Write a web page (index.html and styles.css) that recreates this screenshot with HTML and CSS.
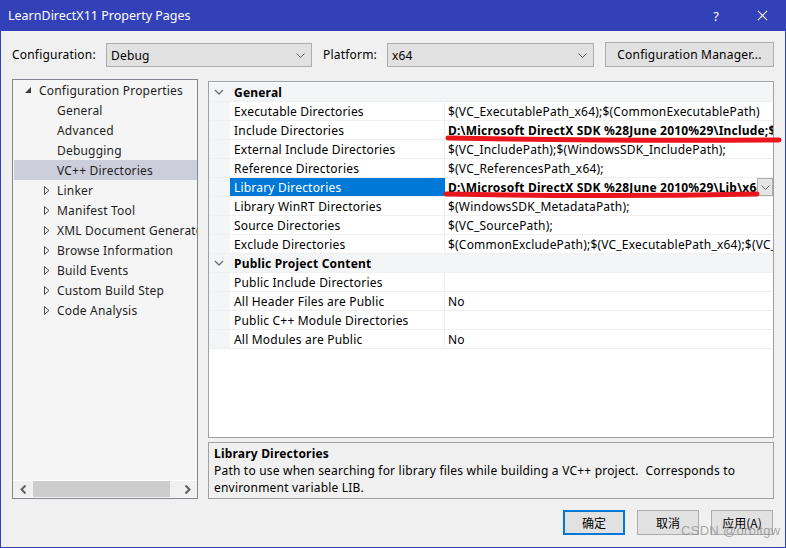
FILE: index.html
```html
<!DOCTYPE html>
<html>
<head>
<meta charset="utf-8">
<link rel="stylesheet" href="styles.css">
</head>
<body>
<div class="window">
  <div class="titlebar">
    <span class="title">LearnDirectX11 Property Pages</span>
    <span class="help">?</span>
    <svg class="close" width="12" height="12" viewBox="0 0 12 12"><path d="M1 1L11 11M11 1L1 11" stroke="#fff" stroke-width="1.2" fill="none"/></svg>
  </div>

  <div class="config-row">
    <span class="lbl lbl-config">Configuration:</span>
    <div class="combo combo-config"><span>Debug</span><svg class="chev" width="9" height="5" viewBox="0 0 9 5"><path d="M0.5 0.5L4.5 4.5L8.5 0.5" stroke="#606060" fill="none"/></svg></div>
    <span class="lbl lbl-platform">Platform:</span>
    <div class="combo combo-platform"><span>x64</span><svg class="chev" width="9" height="5" viewBox="0 0 9 5"><path d="M0.5 0.5L4.5 4.5L8.5 0.5" stroke="#606060" fill="none"/></svg></div>
    <div class="btn btn-manager">Configuration Manager...</div>
  </div>

  <div class="main">
    <div class="tree">
      <div class="tree-items">
        <div class="tree-row lvl0"><svg class="tri-open" width="7" height="7" viewBox="0 0 7 7"><path d="M6 0L6 6L0 6Z" fill="#3c3c3c"/></svg><span>Configuration Properties</span></div>
        <div class="tree-row lvl1">General</div>
        <div class="tree-row lvl1">Advanced</div>
        <div class="tree-row lvl1">Debugging</div>
        <div class="tree-row lvl1 selected">VC++ Directories</div>
        <div class="tree-row lvl1c"><svg class="tri" width="6" height="9" viewBox="0 0 6 9"><path d="M0.5 0.5L5 4.5L0.5 8.5Z" fill="none" stroke="#4a4a4a"/></svg><span>Linker</span></div>
        <div class="tree-row lvl1c"><svg class="tri" width="6" height="9" viewBox="0 0 6 9"><path d="M0.5 0.5L5 4.5L0.5 8.5Z" fill="none" stroke="#4a4a4a"/></svg><span>Manifest Tool</span></div>
        <div class="tree-row lvl1c"><svg class="tri" width="6" height="9" viewBox="0 0 6 9"><path d="M0.5 0.5L5 4.5L0.5 8.5Z" fill="none" stroke="#4a4a4a"/></svg><span>XML Document Generator</span></div>
        <div class="tree-row lvl1c"><svg class="tri" width="6" height="9" viewBox="0 0 6 9"><path d="M0.5 0.5L5 4.5L0.5 8.5Z" fill="none" stroke="#4a4a4a"/></svg><span>Browse Information</span></div>
        <div class="tree-row lvl1c"><svg class="tri" width="6" height="9" viewBox="0 0 6 9"><path d="M0.5 0.5L5 4.5L0.5 8.5Z" fill="none" stroke="#4a4a4a"/></svg><span>Build Events</span></div>
        <div class="tree-row lvl1c"><svg class="tri" width="6" height="9" viewBox="0 0 6 9"><path d="M0.5 0.5L5 4.5L0.5 8.5Z" fill="none" stroke="#4a4a4a"/></svg><span>Custom Build Step</span></div>
        <div class="tree-row lvl1c"><svg class="tri" width="6" height="9" viewBox="0 0 6 9"><path d="M0.5 0.5L5 4.5L0.5 8.5Z" fill="none" stroke="#4a4a4a"/></svg><span>Code Analysis</span></div>
      </div>
      <div class="hscroll">
        <svg class="sarrow" width="7" height="9" viewBox="0 0 7 9"><path d="M5.5 0.5L1.5 4.5L5.5 8.5" stroke="#606060" stroke-width="2" fill="none"/></svg>
        <div class="strack"><div class="sthumb"></div></div>
        <svg class="sarrow" width="7" height="9" viewBox="0 0 7 9"><path d="M1.5 0.5L5.5 4.5L1.5 8.5" stroke="#606060" stroke-width="2" fill="none"/></svg>
      </div>
    </div>

    <div class="right">
      <div class="grid">
        <div class="grow cat"><div class="gut"><svg width="10" height="6" viewBox="0 0 10 6"><path d="M1 1L5 5L9 1" stroke="#6e6e6e" stroke-width="1.3" fill="none"/></svg></div><div class="cat-name">General</div></div>
        <div class="grow"><div class="gut"></div><div class="gname">Executable Directories</div><div class="gval">$(VC_ExecutablePath_x64);$(CommonExecutablePath)</div></div>
        <div class="grow"><div class="gut"></div><div class="gname">Include Directories</div><div class="gval bold">D:\Microsoft DirectX SDK %28June 2010%29\Include;$(IncludePath)</div></div>
        <div class="grow"><div class="gut"></div><div class="gname">External Include Directories</div><div class="gval">$(VC_IncludePath);$(WindowsSDK_IncludePath);</div></div>
        <div class="grow"><div class="gut"></div><div class="gname">Reference Directories</div><div class="gval">$(VC_ReferencesPath_x64);</div></div>
        <div class="grow sel"><div class="gut"></div><div class="gname">Library Directories</div><div class="gval bold"><span class="vtext">D:\Microsoft DirectX SDK %28June 2010%29\Lib\x64;$(LibraryPath)</span><div class="ddbtn"><svg width="9" height="5" viewBox="0 0 9 5"><path d="M0.5 0.5L4.5 4.5L8.5 0.5" stroke="#606060" fill="none"/></svg></div></div></div>
        <div class="grow"><div class="gut"></div><div class="gname">Library WinRT Directories</div><div class="gval">$(WindowsSDK_MetadataPath);</div></div>
        <div class="grow"><div class="gut"></div><div class="gname">Source Directories</div><div class="gval">$(VC_SourcePath);</div></div>
        <div class="grow"><div class="gut"></div><div class="gname">Exclude Directories</div><div class="gval">$(CommonExcludePath);$(VC_ExecutablePath_x64);$(VC_LibraryPath_x64)</div></div>
        <div class="grow cat"><div class="gut"><svg width="10" height="6" viewBox="0 0 10 6"><path d="M1 1L5 5L9 1" stroke="#6e6e6e" stroke-width="1.3" fill="none"/></svg></div><div class="cat-name">Public Project Content</div></div>
        <div class="grow"><div class="gut"></div><div class="gname">Public Include Directories</div><div class="gval"></div></div>
        <div class="grow"><div class="gut"></div><div class="gname">All Header Files are Public</div><div class="gval">No</div></div>
        <div class="grow"><div class="gut"></div><div class="gname">Public C++ Module Directories</div><div class="gval"></div></div>
        <div class="grow"><div class="gut"></div><div class="gname">All Modules are Public</div><div class="gval">No</div></div>
      </div>
      <div class="desc">
        <div class="desc-title">Library Directories</div>
        <div class="desc-text">Path to use when searching for library files while building a VC++ project.&nbsp; Corresponds to<br>environment variable LIB.</div>
      </div>
    </div>
  </div>

  <div class="footer">
    <div class="btn btn-ok">确定</div>
    <div class="btn">取消</div>
    <div class="btn">应用(A)</div>
  </div>

  <div class="watermark">CSDN @orbitgw</div>
  <svg class="marks" width="786" height="548" viewBox="0 0 786 548">
    <path d="M448 138 Q600 141 779 140" stroke="#e8161c" stroke-width="5" stroke-linecap="round" fill="none"/>
    <path d="M446 194 Q600 197 757 194" stroke="#e8161c" stroke-width="5" stroke-linecap="round" fill="none"/>
  </svg>
</div>
</body>
</html>
```

FILE: styles.css
```css
* { box-sizing: border-box; }
html, body { margin: 0; padding: 0; }
body {
  width: 786px;
  height: 548px;
  overflow: hidden;
  font-family: "Noto Sans", "Noto Sans CJK SC", sans-serif;
  font-size: 12px;
  letter-spacing: 0.2px;
  color: #000;
}
svg { flex: none; }
.window {
  position: relative;
  width: 786px;
  height: 548px;
  border: 1px solid #3341b8;
  border-top: none;
  background: #f0f0f0;
  display: flex;
  flex-direction: column;
}
.titlebar {
  height: 31px;
  flex: none;
  background: #3341b8;
  color: #fff;
  display: flex;
  align-items: center;
  padding-left: 8px;
  margin: 0 -1px;
  font-size: 12.5px;
  letter-spacing: 0;
}
.title { flex: 1; }
.help { font-size: 13px; margin-right: 38px; }
.close { margin-right: 18px; width: 11px; height: 11px; }

.config-row {
  display: flex;
  align-items: flex-start;
  height: 25px;
  margin-top: 11px;
  padding-left: 11px;
  flex: none;
}
.lbl { line-height: 25px; color: #000; }
.lbl-config { width: 94px; }
.lbl-platform { width: 64px; margin-left: 11px; }
.combo {
  margin-top: 1px;
  height: 24px;
  width: 206px;
  background: #e1e1e1;
  border: 1px solid #adadad;
  display: flex;
  align-items: center;
  justify-content: space-between;
  padding: 0 6px 0 4px;
}
.combo-platform { width: 207px; }
.chev { display: block; }
.btn {
  height: 25px;
  background: #e1e1e1;
  border: 1px solid #adadad;
  display: flex;
  align-items: center;
  justify-content: center;
}
.btn-manager { margin-left: 11px; width: 169px; }

.main {
  display: flex;
  margin-top: 12px;
  padding-left: 11px;
  gap: 10px;
  height: 420px;
  flex: none;
}
.tree {
  width: 186px;
  height: 420px;
  border: 1px solid #828790;
  background: #f5f5f5;
  display: flex;
  flex-direction: column;
  overflow: hidden;
}
.tree-items { flex: 1; padding-left: 1px; }
.tree-row {
  height: 20px;
  display: flex;
  align-items: center;
  white-space: nowrap;
  color: #1e1e1e;
  overflow: hidden;
}
.lvl0 { padding-left: 11px; }
.tri-open { margin-right: 7px; }
.lvl1 { padding-left: 43px; }
.lvl1c { padding-left: 30px; }
.tri { margin-right: 7px; }
.selected { background: #cccedb; }
.hscroll {
  height: 17px;
  border-top: 1px solid #fff;
  background: #f0f0f0;
  display: flex;
  align-items: center;
  margin-bottom: 1px;
}
.sarrow { margin: 0 6px 0 7px; }
.strack { flex: 1; height: 16px; display: flex; align-items: stretch; }
.sthumb { width: 137px; background: #cdcdcd; }

.right {
  width: 566px;
  padding-top: 2px;
  display: flex;
  flex-direction: column;
}
.grid {
  height: 357px;
  border: 1px solid #a0a0a0;
  background: #fff;
  padding-top: 1px;
  overflow: hidden;
}
.grow {
  height: 19px;
  display: flex;
  border-bottom: 1px solid #f0f0f0;
  white-space: nowrap;
}
.gut {
  width: 21px;
  flex: none;
  background: #f4f5f7;
  display: flex;
  align-items: center;
  justify-content: center;
  padding-right: 1px;
}
.cat { background: #f4f5f7; }
.cat-name, .gname, .gval {
  height: 18px;
  padding-top: 1px;
  line-height: 18px;
  overflow: hidden;
}
.cat-name { font-weight: bold; padding-left: 4px; }
.gname {
  width: 215px;
  flex: none;
  padding-left: 4px;
  border-right: 1px solid #f0f0f0;
}
.gval {
  flex: 1;
  padding-left: 3px;
  display: flex;
}
.bold { font-weight: bold; }
.vtext { flex: 1; overflow: hidden; }
.sel .gname { background: #0078d7; color: #fff; border-right-color: #0078d7; }
.sel .gval { padding-top: 0; }
.sel .vtext { padding-top: 1px; }
.ddbtn {
  width: 16px;
  flex: none;
  height: 18px;
  background: #e5e5e5;
  border: 1px solid #adadad;
  display: flex;
  align-items: center;
  justify-content: center;
}
.desc {
  margin-top: 4px;
  height: 57px;
  border: 1px solid #a0a0a0;
  background: #f0f0f0;
  padding: 2px 5px;
  line-height: 17px;
}
.desc-title { font-weight: bold; }

.footer {
  display: flex;
  justify-content: flex-end;
  gap: 12px;
  margin-top: 11px;
  padding-right: 12px;
}
.footer .btn { width: 62px; font-family: "Noto Sans CJK SC", sans-serif; letter-spacing: 0; }
.btn-ok { border: 2px solid #0078d7; }

.watermark {
  position: absolute;
  left: 680px;
  top: 523px;
  font-size: 13px;
  color: rgba(140,140,140,0.75);
  font-family: "Liberation Sans", sans-serif;
  letter-spacing: 0.3px;
}
.marks { position: absolute; left: -1px; top: 0; pointer-events: none; }
```
